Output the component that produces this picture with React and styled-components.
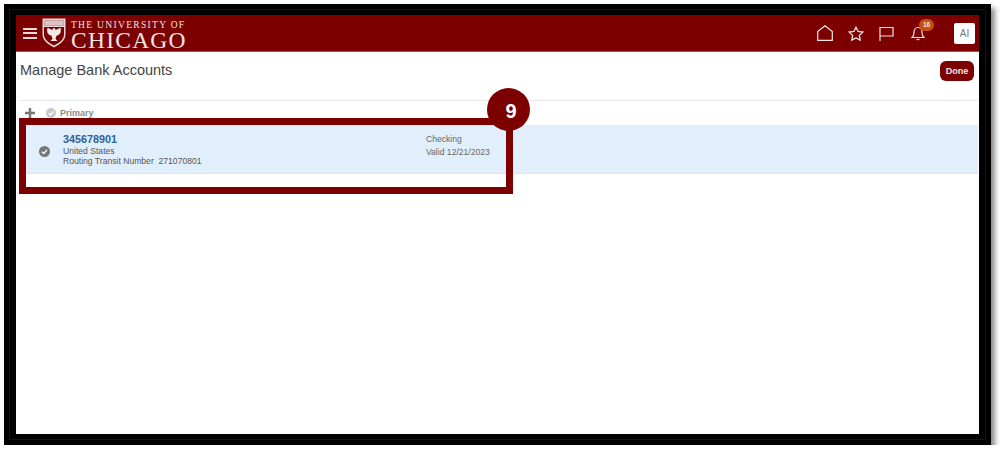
import React from 'react';
import styled, { createGlobalStyle } from 'styled-components';

const GlobalStyle = createGlobalStyle`
  html, body {
    margin: 0;
    padding: 0;
    background: #fff;
    font-family: 'Liberation Sans', Arial, sans-serif;
  }
`;

const Frame = styled.div`
  position: relative;
  box-sizing: border-box;
  width: 987px;
  height: 441px;
  margin: 4px 0 0 4px;
  padding: 11px 12px 11px 12px;
  background: #000;
  box-shadow: inset 0 0 0 5px #000, inset 0 0 0 6px #141414, 4px 4px 5px rgba(0, 0, 0, 0.45);
`;

const Page = styled.div`
  height: 100%;
  background: #fff;
  display: flex;
  flex-direction: column;
`;

const Header = styled.header`
  height: 37px;
  flex: none;
  background: #7c0000;
  border-bottom: 1px solid #a85050;
  box-sizing: border-box;
  display: flex;
  align-items: center;
  padding: 0 4px 0 7px;
`;

const Burger = styled.div`
  width: 14px;
  height: 11px;
  margin-right: 5px;
  border-top: 2px solid #e8dcdc;
  border-bottom: 2px solid #e8dcdc;
  box-sizing: border-box;
  position: relative;
  &::after {
    content: '';
    position: absolute;
    left: 0;
    right: 0;
    top: 2.5px;
    height: 2px;
    background: #e8dcdc;
  }
`;

const Logo = styled.div`
  display: flex;
  flex-direction: column;
  margin: 3px 0 0 5px;
  color: #efe6e6;
  font-family: 'Liberation Serif', 'Times New Roman', serif;
`;

const LogoTop = styled.span`
  font-size: 9.5px;
  line-height: 10px;
  letter-spacing: 1.32px;
  white-space: nowrap;
`;

const LogoMain = styled.span`
  font-size: 23.5px;
  line-height: 20px;
  letter-spacing: 1.25px;
  white-space: nowrap;
`;

const Spacer = styled.div`
  flex: 1;
`;

const IconSlot = styled.div`
  position: relative;
  display: flex;
  align-items: center;
  justify-content: center;
  width: ${(p) => p.$w}px;
  margin-left: ${(p) => p.$ml}px;
`;

const Badge = styled.span`
  position: absolute;
  top: -7px;
  left: 8px;
  width: 15px;
  height: 12px;
  border-radius: 6px;
  background: #c9500c;
  color: #f6e6dc;
  font-size: 6.5px;
  font-weight: 700;
  line-height: 12px;
  text-align: center;
`;

const Avatar = styled.div`
  width: 21px;
  height: 21px;
  margin-left: 29px;
  border-radius: 2px;
  background: #fff;
  color: #777;
  font-size: 10px;
  line-height: 21px;
  text-align: center;
`;

const TitleBar = styled.div`
  height: 49px;
  flex: none;
  box-sizing: border-box;
  margin: 0 1px 0 4px;
  border-bottom: 1px solid #e3e7ec;
  display: flex;
  justify-content: space-between;
  align-items: flex-start;
  padding: 9px 4px 0 0;
`;

const Title = styled.h1`
  margin: 0;
  font-size: 14.5px;
  font-weight: 400;
  color: #444;
  line-height: 19px;
`;

const DoneButton = styled.button`
  width: 34px;
  height: 20px;
  padding: 0;
  border: none;
  border-radius: 6px;
  background: #7c0000;
  color: #f4e8e8;
  font-family: inherit;
  font-size: 9px;
  font-weight: 700;
`;

const Toolbar = styled.div`
  height: 24px;
  flex: none;
  box-sizing: border-box;
  display: flex;
  align-items: center;
  padding: 0 0 0 9px;
  gap: 11px;
`;

const Primary = styled.span`
  margin-left: -7px;
  color: #8b8b8b;
  font-size: 9px;
  font-weight: 700;
`;

const Row = styled.div`
  height: 49px;
  flex: none;
  box-sizing: border-box;
  margin: 0 1px 0 4px;
  background: #e1effc;
  border-bottom: 1px solid #e0e4e8;
  display: flex;
  align-items: flex-start;
`;

const RowCheck = styled.div`
  width: 43px;
  padding: 18px 0 0 19px;
  box-sizing: border-box;
  flex: none;
`;

const AccountInfo = styled.div`
  width: 363px;
  flex: none;
  padding-top: 8px;
  display: flex;
  flex-direction: column;
  color: #555;
  font-size: 8.6px;
  line-height: 10px;
`;

const AccountNumber = styled.a`
  color: #2f5f98;
  font-size: 10.8px;
  font-weight: 700;
  line-height: 12px;
  margin-bottom: 1px;
`;

const TypeInfo = styled.div`
  padding-top: 9px;
  display: flex;
  flex-direction: column;
  gap: 2px;
  color: #666;
  font-size: 8.6px;
  line-height: 11px;
`;

const Callout = styled.div`
  position: absolute;
  left: 15px;
  top: 114px;
  width: 494px;
  height: 76px;
  box-sizing: border-box;
  border: 7px solid #7c0000;
`;

const CalloutNumber = styled.div`
  position: absolute;
  left: 483px;
  top: 84px;
  width: 43px;
  height: 43px;
  box-sizing: border-box;
  padding: 3px 0 0 5px;
  border-radius: 50%;
  background: #7c0000;
  color: #fff;
  font-size: 20px;
  font-weight: 700;
  line-height: 40px;
  text-align: center;
`;

const Crest = () => (
  <svg width="24" height="30" viewBox="0 0 24 30">
    <path d="M.5.5h23v16c0 6-6 10-11.500 13C6.500 26.500.5 22.500.5 16.500z" fill="#e6d8d8" />
    <path d="M2 2h20v6H2z" fill="#c9a4a4" />
    <path d="M3 4h18M3 6h18" stroke="#f4ecec" strokeWidth="0.9" />
    <path d="M2 9h20v7.500c0 5-5 8.500-10 11-5-2.500-10-6-10-11z" fill="#7c0000" />
    <path d="M12 10c1 0 1.500 1 1.500 2l5-2.200c1 4 0 7-4 8l-1 3 2 2.200H8.500l2-2.200-1-3c-4-1-5-4-4-8l5 2.200c0-1 .5-2 1.500-2z" fill="#f2eaea" />
  </svg>
);

const Check = ({ size, bg }) => (
  <svg width={size} height={size} viewBox="0 0 12 12">
    <circle cx="6" cy="6" r="6" fill={bg} />
    <path d="M3.200 6.200l2 2 3.600-4" fill="none" stroke="#fff" strokeWidth="1.500" />
  </svg>
);

const HomeIcon = () => (
  <svg width="16" height="16" viewBox="0 0 16 16" fill="none" stroke="#eee6e6" strokeWidth="1.200">
    <path d="M.7 6.500L8 .8l7.300 5.700v8.800H.7z" />
  </svg>
);

const StarIcon = () => (
  <svg width="16" height="15" viewBox="0 0 16 15" fill="none" stroke="#f0e8e8" strokeWidth="1.300">
    <path d="M8 1.200l2.100 4.300 4.700.6-3.400 3.300.8 4.700L8 11.900l-4.200 2.200.8-4.700L1.200 6.100l4.700-.6z" />
  </svg>
);

const FlagIcon = () => (
  <svg width="15" height="15" viewBox="0 0 15 15" fill="none" stroke="#eee6e6" strokeWidth="1.200">
    <path d="M1 15V1.500h13v8.500H1" />
  </svg>
);

const BellIcon = () => (
  <svg width="14" height="15" viewBox="0 0 14 15" fill="none" stroke="#eee6e6" strokeWidth="1.200">
    <path d="M1 11.500c1.500-1 2-2 2-5C3 3.500 4.800 1.500 7 1.500s4 2 4 5c0 3 .5 4 2 5z" />
    <path d="M5.500 13.500h3" />
  </svg>
);

export default function App() {
  return (
    <>
      <GlobalStyle />
      <Frame>
        <Page>
          <Header>
            <Burger />
            <Crest />
            <Logo>
              <LogoTop>THE UNIVERSITY OF</LogoTop>
              <LogoMain>CHICAGO</LogoMain>
            </Logo>
            <Spacer />
            <IconSlot $w={16} $ml={0}><HomeIcon /></IconSlot>
            <IconSlot $w={16} $ml={15}><StarIcon /></IconSlot>
            <IconSlot $w={15} $ml={15}><FlagIcon /></IconSlot>
            <IconSlot $w={14} $ml={17}>
              <BellIcon />
              <Badge>16</Badge>
            </IconSlot>
            <Avatar>AI</Avatar>
          </Header>
          <TitleBar>
            <Title>Manage Bank Accounts</Title>
            <DoneButton>Done</DoneButton>
          </TitleBar>
          <Toolbar>
            <svg width="10" height="10" viewBox="0 0 10 10">
              <path d="M5 0v10M0 5h10" stroke="#777" strokeWidth="2.500" />
            </svg>
            <Check size={10} bg="#c9c9c9" />
            <Primary>Primary</Primary>
          </Toolbar>
          <Row>
            <RowCheck><Check size={11} bg="#777" /></RowCheck>
            <AccountInfo>
              <AccountNumber>345678901</AccountNumber>
              <span>United States</span>
              <span>Routing Transit Number&nbsp; 271070801</span>
            </AccountInfo>
            <TypeInfo>
              <span>Checking</span>
              <span>Valid 12/21/2023</span>
            </TypeInfo>
          </Row>
        </Page>
        <Callout />
        <CalloutNumber>9</CalloutNumber>
      </Frame>
    </>
  );
}
